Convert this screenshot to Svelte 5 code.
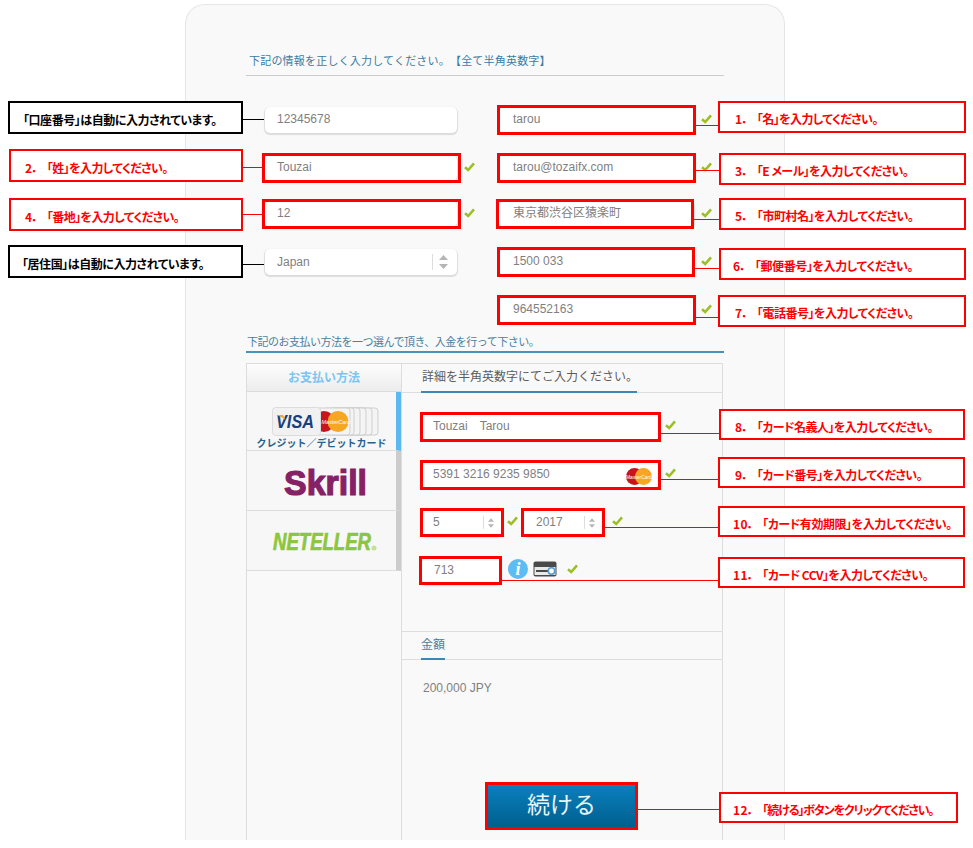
<script lang="ts">
  // annotation layer: callouts, leader lines and red frames sit over the form
  const callouts = [
    { x: 8, y: 101, w: 235, h: 33, pad: 13, ls: -0.45, tone: 'black', n: '', text: '「口座番号」は自動に入力されています。' },
    { x: 9, y: 149, w: 234, h: 33, pad: 14, ls: -0.6, tone: 'red', n: '2．', text: '「姓」を入力してください。' },
    { x: 9, y: 198, w: 234, h: 33, pad: 14, ls: -0.6, tone: 'red', n: '4．', text: '「番地」を入力してください。' },
    { x: 8, y: 245, w: 235, h: 33, pad: 12, ls: -0.45, tone: 'black', n: '', text: '「居住国」は自動に入力されています。' },
    { x: 718, y: 101, w: 248, h: 32, pad: 15, ls: -0.6, tone: 'red', n: '1．', text: '「名」を入力してください。' },
    { x: 719, y: 153, w: 247, h: 32, pad: 14, ls: -0.55, tone: 'red', n: '3．', text: '「E メール」を入力してください。' },
    { x: 719, y: 198, w: 247, h: 32, pad: 14, ls: -0.5, tone: 'red', n: '5．', text: '「市町村名」を入力してください。' },
    { x: 719, y: 248, w: 247, h: 32, pad: 12, ls: -0.4, tone: 'red', n: '6．', text: '「郵便番号」を入力してください。' },
    { x: 718, y: 295, w: 248, h: 32, pad: 15, ls: -0.5, tone: 'red', n: '7．', text: '「電話番号」を入力してください。' },
    { x: 719, y: 409, w: 246, h: 31, pad: 14, ls: -0.55, tone: 'red', n: '8．', text: '「カード名義人」を入力してください。' },
    { x: 718, y: 457, w: 247, h: 31, pad: 15, ls: -0.5, tone: 'red', n: '9．', text: '「カード番号」を入力してください。' },
    { x: 718, y: 506, w: 247, h: 31, pad: 13, ls: -0.45, tone: 'red', n: '10．', text: '「カード有効期限」を入力してください。' },
    { x: 718, y: 557, w: 247, h: 31, pad: 13, ls: -0.5, tone: 'red', n: '11．', text: '「カード CCV」を入力してください。' },
    { x: 719, y: 792, w: 239, h: 31, pad: 12, ls: -1.15, tone: 'red', n: '12．', text: '「続ける」ボタンをクリックてください。' }
  ];

  const leaders = [
    { x: 243, y: 119, w: 21, c: '#000' },
    { x: 243, y: 167, w: 20, c: '#f00' },
    { x: 243, y: 214, w: 20, c: '#f00' },
    { x: 243, y: 264, w: 21, c: '#000' },
    { x: 695, y: 125, w: 24, c: '#f00' },
    { x: 695, y: 170, w: 24, c: '#f00' },
    { x: 693, y: 219, w: 26, c: '#f00' },
    { x: 694, y: 268, w: 25, c: '#f00' },
    { x: 695, y: 317, w: 24, c: '#f00' },
    { x: 660, y: 433, w: 59, c: '#f00' },
    { x: 660, y: 479, w: 59, c: '#f00' },
    { x: 604, y: 527, w: 115, c: '#f00' },
    { x: 501, y: 580, w: 218, c: '#f00' },
    { x: 638, y: 809, w: 81, c: '#f00' }
  ];

  const frames = [
    { x: 262, y: 153, w: 199, h: 30 },
    { x: 262, y: 199, w: 199, h: 30 },
    { x: 497, y: 105, w: 199, h: 30 },
    { x: 497, y: 153, w: 199, h: 30 },
    { x: 496, y: 199, w: 198, h: 30 },
    { x: 497, y: 247, w: 198, h: 30 },
    { x: 497, y: 295, w: 199, h: 30 },
    { x: 420, y: 412, w: 241, h: 30 },
    { x: 420, y: 460, w: 241, h: 30 },
    { x: 420, y: 508, w: 84, h: 29 },
    { x: 521, y: 508, w: 84, h: 29 },
    { x: 419, y: 556, w: 83, h: 29 },
    { x: 485, y: 782, w: 153, h: 48 }
  ];

  // left edges of the cards fanned out behind the MasterCard one
  const stackEdges = [76, 70, 64, 58, 52];
</script>

{#snippet check()}
  <svg class="check" width="11" height="10" viewBox="0 0 11 10">
    <path d="M1 5.2 L4.2 8 L10 1.4" fill="none" stroke="#9cbf25" stroke-width="2.6" />
  </svg>
{/snippet}

{#snippet arrows(big)}
  <span class="spin" class:big>
    <svg width={big ? 9 : 6} height={big ? 14 : 10} viewBox="0 0 9 14">
      <path d="M4.5 0 L9 5 H0 Z M4.5 14 L9 9 H0 Z" fill="#b5b5b5" />
    </svg>
  </span>
{/snippet}

{#snippet mastercard()}
  <svg width="26" height="17" viewBox="0 0 26 17">
    <circle cx="8.5" cy="8.5" r="8.5" fill="#c8151d" />
    <circle cx="17.5" cy="8.5" r="8.5" fill="#f5a623" />
    <text x="13" y="10.5" font-size="5" fill="#fff" text-anchor="middle" font-family="Liberation Sans">MasterCard</text>
  </svg>
{/snippet}

<div class="stage">
  <main class="panel">
    <h2 class="head">下記の情報を正しく入力してください。【全て半角英数字】</h2>

    <div class="grid">
      <div class="cell"><div class="input">12345678</div></div>
      <div class="cell right"><div class="input">tarou</div>{@render check()}</div>
      <div class="cell"><div class="input">Touzai</div>{@render check()}</div>
      <div class="cell right"><div class="input">tarou@tozaifx.com</div>{@render check()}</div>
      <div class="cell"><div class="input">12</div>{@render check()}</div>
      <div class="cell right"><div class="input">東京都渋谷区猿楽町</div>{@render check()}</div>
      <div class="cell"><div class="input select">Japan{@render arrows(true)}</div></div>
      <div class="cell right"><div class="input">1500 033</div>{@render check()}</div>
      <div class="cell"></div>
      <div class="cell right"><div class="input">964552163</div>{@render check()}</div>
    </div>

    <h2 class="head pay">下記のお支払い方法を一つ選んで頂き、入金を行って下さい。</h2>

    <div class="tabs">
      <aside class="methods">
        <div class="methods-title">お支払い方法</div>
        <div class="method active">
          <svg class="logo-card" width="110" height="31" viewBox="0 0 110 31">
            {#each stackEdges as e}
              <rect x={e} y="1" width="30" height="27" rx="3" fill="#f4f4f4" stroke="#cfcfcf" />
            {/each}
            <rect x="44" y="1" width="34" height="27" rx="3" fill="#f4f4f4" stroke="#cfcfcf" />
            <circle cx="52" cy="14.5" r="10.5" fill="#c8151d" />
            <circle cx="66" cy="14.5" r="10.5" fill="#f5a623" />
            <text x="49.5" y="16.5" font-size="5.5" fill="#fff" font-family="Liberation Sans" font-style="italic">MasterCard</text>
            <rect x="0.5" y="0.5" width="48" height="28" rx="3" fill="#f1f1f1" stroke="#dcdcdc" />
            <text x="4" y="21" class="visa" textLength="38" lengthAdjust="spacingAndGlyphs">VISA</text>
            <path d="M4 8 H11 L13.5 13 Q10 9.5 4 8 Z" fill="#f0a81c" />
          </svg>
          <div class="caption">クレジット／デビットカード</div>
        </div>
        <div class="method">
          <svg width="100" height="45" viewBox="0 0 100 45">
            <text x="12" y="37" class="skrill" textLength="83" lengthAdjust="spacingAndGlyphs">Skrill</text>
          </svg>
        </div>
        <div class="method">
          <svg width="130" height="45" viewBox="0 0 130 45">
            <text x="16" y="32" class="neteller" textLength="98" lengthAdjust="spacingAndGlyphs">NETELLER</text>
            <circle cx="117" cy="30" r="2.5" fill="#c5e09a" />
          </svg>
        </div>
      </aside>

      <section class="detail">
        <div class="tabbar"><span class="tab">詳細を半角英数字にてご入力ください。</span></div>
        <div class="fields">
          <div class="row"><div class="input wide">Touzai　Tarou</div>{@render check()}</div>
          <div class="row">
            <div class="input wide number">5391 3216 9235 9850{@render mastercard()}</div>{@render check()}
          </div>
          <div class="row">
            <div class="input short select">5{@render arrows(false)}</div>{@render check()}
            <div class="input short select year">2017{@render arrows(false)}</div>
            <span class="year-check">{@render check()}</span>
          </div>
          <div class="row">
            <div class="input cvv">713</div>
            <span class="info">i</span>
            <svg class="cardicon" width="24" height="16" viewBox="0 0 24 16">
              <rect x="0.5" y="0.5" width="23" height="15" rx="2" fill="#4a4a4a" />
              <rect x="1.5" y="6" width="21" height="8" fill="#e9e9e9" />
              <rect x="3" y="9" width="12" height="2" fill="#4a4a4a" />
              <circle cx="18.5" cy="10" r="3.2" fill="#fff" stroke="#5b9bd0" stroke-width="1.6" />
            </svg>
            {@render check()}
          </div>
        </div>
        <div class="tabbar amount-bar"><span class="tab small">金額</span></div>
        <div class="amount">
          <p>200,000 JPY</p>
          <button class="next">続ける</button>
        </div>
      </section>
    </div>
  </main>

  {#each leaders as l}
    <i class="leader" style="left:{l.x}px;top:{l.y}px;width:{l.w}px;background:{l.c}"></i>
  {/each}
  {#each frames as f}
    <i class="frame" style="left:{f.x}px;top:{f.y}px;width:{f.w}px;height:{f.h}px"></i>
  {/each}
  {#each callouts as c}
    <div class="callout {c.tone}" style="left:{c.x}px;top:{c.y}px;width:{c.w}px;height:{c.h}px;padding-left:{c.pad}px;letter-spacing:{c.ls}px">
      {#if c.n}<span class="num">{c.n}</span>{/if}{c.text}
    </div>
  {/each}
</div>

<style>
  :global(body) {
    margin: 0;
    background: #fff;
  }

  .stage {
    position: relative;
    width: 973px;
    height: 848px;
    overflow: hidden;
    font-family: "Liberation Sans", "Noto Sans CJK JP", sans-serif;
  }

  .panel {
    box-sizing: border-box;
    width: 600px;
    height: 836px;
    margin-left: 185px;
    position: relative;
    top: 4px;
    padding: 46px 60px 0;
    background: #f9f9f9;
    border: 1px solid #e6e6e6;
    border-bottom: 0;
    border-radius: 20px 20px 0 0;
    display: flex;
    flex-direction: column;
  }

  .head {
    margin: 0;
    width: 478px;
    box-sizing: border-box;
    height: 25px;
    padding: 2px 0 0 3px;
    font-size: 11px;
    line-height: 16px;
    font-weight: 400;
    color: #3b7ba3;
    border-bottom: 1px solid #ccc;
    text-spacing-trim: space-all;
    letter-spacing: 0.2px;
  }

  .head.pay {
    margin-top: 8px;
    height: 20px;
    padding: 1px 0 0 1px;
    color: #4a7f9f;
    border-bottom: 2px solid #4a93b8;
    letter-spacing: -0.5px;
  }

  .grid {
    margin-top: 31px;
    padding-left: 19px;
    display: grid;
    grid-template-columns: 234px 1fr;
    grid-template-rows: 28px 26px 28px 28px 28px;
    row-gap: 20px;
  }

  .cell {
    display: flex;
    align-items: flex-start;
    gap: 7px;
  }

  .check {
    flex: none;
    margin-top: 7px;
  }

  .input {
    box-sizing: border-box;
    width: 192px;
    height: 26px;
    padding: 0 12px;
    background: #fff;
    border-radius: 5px;
    box-shadow: 0 1px 1px 1px #dcdcdc;
    color: #7f7f7f;
    font-size: 12px;
    line-height: 25px;
    display: flex;
    align-items: flex-start;
    flex: none;
  }

  .right .input {
    width: 195px;
    padding-left: 14px;
  }

  .select {
    position: relative;
  }

  .cell .select {
    line-height: 26px;
  }

  .spin {
    position: absolute;
    right: 8px;
    top: 6px;
    padding-left: 4px;
    border-left: 1px solid #ddd;
    height: 13px;
    display: flex;
    align-items: center;
  }

  .spin.big {
    right: 9px;
    top: 5px;
    padding-left: 6px;
    height: 16px;
  }

  .tabs {
    margin-top: 10px;
    width: 476px;
    flex: 1;
    display: flex;
    min-height: 0;
  }

  .methods {
    box-sizing: border-box;
    width: 155px;
    border: 1px solid #ddd;
    border-width: 1px 0 0 1px;
    flex: none;
  }

  .methods-title {
    height: 27px;
    line-height: 28px;
    text-align: center;
    font-size: 12px;
    font-weight: 700;
    color: #7cc4f2;
    background: linear-gradient(#fdfdfd, #ececec);
    border-bottom: 1px solid #ddd;
  }

  .method {
    box-sizing: border-box;
    height: 60px;
    border-right: 5px solid #ccc;
    border-bottom: 1px solid #ddd;
    display: flex;
    flex-direction: column;
    align-items: center;
    justify-content: center;
    background: #f7f7f7;
  }

  .method.active {
    height: 59px;
    border-right-color: #5bb8f0;
    position: relative;
    justify-content: flex-start;
    padding-top: 15px;
  }

  .method.active::after {
    content: '';
    position: absolute;
    right: -9px;
    top: 26px;
    border: 4px solid transparent;
    border-left-color: #5bb8f0;
  }

  .logo-card {
    align-self: flex-start;
    margin-left: 25px;
    flex: none;
  }

  .caption {
    margin-top: -1px;
    font-size: 10px;
    line-height: 13px;
    font-weight: 700;
    color: #27628f;
    white-space: nowrap;
  }

  .visa {
    font: italic 700 18px "Liberation Sans", sans-serif;
    fill: #1a3f7a;
  }

  .skrill {
    font: 700 35px "Liberation Sans", sans-serif;
    fill: #862165;
    stroke: #862165;
    stroke-width: 1.2px;
  }

  .neteller {
    font: italic 700 23.5px "Liberation Sans", sans-serif;
    fill: #8cc63f;
    stroke: #8cc63f;
    stroke-width: 0.7px;
  }

  .detail {
    box-sizing: border-box;
    width: 322px;
    border: 1px solid #ddd;
    border-width: 1px 1px 0 1px;
    display: flex;
    flex-direction: column;
    flex: none;
  }

  .tabbar {
    box-sizing: border-box;
    height: 29px;
    padding-left: 19px;
    border-bottom: 1px solid #ddd;
    display: flex;
    flex: none;
  }

  .tab {
    box-sizing: border-box;
    height: 29px;
    width: 216px;
    line-height: 27px;
    padding-left: 1px;
    font-size: 12px;
    color: #5c5c5c;
    border-bottom: 2px solid #3f87b3;
    white-space: nowrap;
  }

  .tab.small {
    width: 24px;
    padding-left: 0;
    color: #4a7f9f;
  }

  .fields {
    height: 238px;
    box-sizing: border-box;
    padding: 21px 0 0 20px;
    display: flex;
    flex-direction: column;
    gap: 22px;
    flex: none;
  }

  .row {
    height: 26px;
    display: flex;
    align-items: flex-start;
    gap: 5px;
  }

  .row .check {
    margin-top: 6px;
  }

  .input.wide {
    width: 237px;
    margin-right: 1px;
    position: relative;
    justify-content: space-between;
    padding: 0 7px 0 11px;
  }

  .number svg {
    margin-top: 6px;
  }

  .input.short {
    width: 80px;
    padding-left: 11px;
  }

  .input.year {
    padding-left: 13px;
  }

  .year-check {
    display: flex;
    margin-left: 4px;
  }

  .input.cvv {
    width: 79px;
    padding-left: 12px;
    margin-right: 2px;
  }

  .info {
    width: 20px;
    height: 20px;
    margin-top: 1px;
    border-radius: 50%;
    background: #5cbcf3;
    color: #fff;
    font: italic 700 18px/20px "Liberation Serif", serif;
    text-align: center;
  }

  .cardicon {
    flex: none;
    margin-top: 3px;
  }

  .row .cardicon + .check {
    margin-left: 5px;
  }

  .amount-bar {
    border-top: 1px solid #ddd;
    height: 29px;
  }

  .amount-bar .tab {
    height: 28px;
    line-height: 26px;
  }

  .amount {
    padding: 20px 0 0 21px;
    flex: 1;
  }

  .amount p {
    margin: 0;
    font-size: 12px;
    line-height: 16px;
    color: #7f7f7f;
  }

  .next {
    display: block;
    box-sizing: border-box;
    margin: 89px 0 0 65px;
    width: 147px;
    height: 42px;
    padding: 0 0 7px;
    border: 0;
    background: linear-gradient(#0a80be, #005f8e);
    color: #e8f4fa;
    font-family: inherit;
    font-size: 23px;
  }

  .leader {
    position: absolute;
    height: 1px;
  }

  .frame {
    position: absolute;
    box-sizing: border-box;
    border: 3px solid #f00;
  }

  .callout {
    position: absolute;
    box-sizing: border-box;
    padding-top: 3px;
    display: flex;
    align-items: center;
    background: #fff;
    border: 2px solid;
    font-family: "Noto Sans CJK JP", sans-serif;
    font-size: 12px;
    font-weight: 700;
    font-feature-settings: "palt";
    white-space: nowrap;
  }

  .num {
    margin-right: 8px;
    letter-spacing: 0.4px;
  }

  .callout.red {
    color: #f00;
    border-color: #f00;
  }

  .callout.black {
    color: #000;
    border-color: #000;
  }
</style>
